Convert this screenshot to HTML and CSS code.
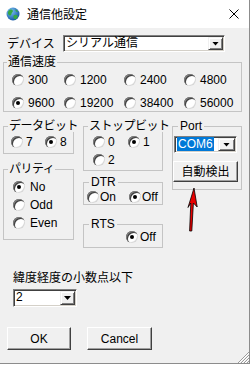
FILE: index.html
```html
<!DOCTYPE html>
<html lang="ja">
<head>
  <meta charset="UTF-8" />
  <title>通信他設定</title>
  <link rel="stylesheet" href="styles.css">
</head>
<body>
<div class="win">

  <!-- title bar -->
  <div class="titlebar">
    <svg class="app-icon" width="14" height="14" viewBox="0 0 14 14">
      <defs>
        <radialGradient id="globe" cx="35%" cy="30%" r="80%">
          <stop offset="0" stop-color="#7cc4f5"/>
          <stop offset="1" stop-color="#0a4c9c"/>
        </radialGradient>
      </defs>
      <circle cx="7" cy="7" r="6.5" fill="url(#globe)"/>
      <path d="M2.2 4.5 C3.5 2.2 6 2 6.8 3.6 C7.4 5 5.6 5.6 5.4 7.2 C5.2 8.8 3.2 9 2.4 7.6 C1.9 6.6 1.8 5.4 2.2 4.5 Z" fill="#35a845"/>
      <path d="M7.6 8.4 C9 7.4 11.6 7.8 11.8 9.4 C11.4 11 9.6 12.6 8.4 12 C7.6 11.2 7 9.4 7.6 8.4 Z" fill="#35a845"/>
      <path d="M9 2.4 C10.4 2.6 11.6 3.6 12 5 C11 5.2 9.8 4.6 9 2.4 Z" fill="#35a845"/>
    </svg>
    <span class="title">通信他設定</span>
    <svg class="close" width="10" height="10" viewBox="0 0 10 10">
      <path d="M0.5 0.5 L9.5 9.5 M9.5 0.5 L0.5 9.5" stroke="#000" stroke-width="1"/>
    </svg>
  </div>

  <div class="client">

    <div class="device-row">
      <span class="lbl">デバイス</span>
      <div class="combo combo-device"><span class="val">シリアル通信</span><span class="drop"></span></div>
    </div>

    <!-- baud rate -->
    <fieldset class="grp grp-speed">
      <legend>通信速度</legend>
      <div class="opts speed-opts">
        <label class="opt"><span class="rb"></span>300</label>
        <label class="opt"><span class="rb"></span>1200</label>
        <label class="opt"><span class="rb"></span>2400</label>
        <label class="opt"><span class="rb"></span>4800</label>
        <label class="opt"><span class="rb on"></span>9600</label>
        <label class="opt"><span class="rb"></span>19200</label>
        <label class="opt"><span class="rb"></span>38400</label>
        <label class="opt"><span class="rb"></span>56000</label>
      </div>
    </fieldset>

    <div class="mid">
      <div class="col">
        <fieldset class="grp grp-data">
          <legend class="kana">データビット</legend>
          <div class="opts data-opts">
            <label class="opt"><span class="rb"></span>7</label>
            <label class="opt"><span class="rb on"></span>8</label>
          </div>
        </fieldset>
        <fieldset class="grp grp-parity">
          <legend class="kana">パリティ</legend>
          <div class="opts parity-opts">
            <label class="opt"><span class="rb on"></span>No</label>
            <label class="opt"><span class="rb"></span>Odd</label>
            <label class="opt"><span class="rb"></span>Even</label>
          </div>
        </fieldset>
      </div>

      <div class="col">
        <fieldset class="grp grp-stop">
          <legend class="kana">ストップビット</legend>
          <div class="opts stop-opts">
            <label class="opt"><span class="rb"></span>0</label>
            <label class="opt"><span class="rb on"></span>1</label>
            <label class="opt"><span class="rb"></span>2</label>
          </div>
        </fieldset>
        <fieldset class="grp grp-dtr">
          <legend>DTR</legend>
          <div class="opts dtr-opts">
            <label class="opt"><span class="rb"></span>On</label>
            <label class="opt"><span class="rb on"></span>Off</label>
          </div>
        </fieldset>
        <fieldset class="grp grp-rts">
          <legend>RTS</legend>
          <div class="opts rts-opts">
            <label class="opt"><span class="rb on"></span>Off</label>
          </div>
        </fieldset>
      </div>

      <div class="col">
        <fieldset class="grp grp-port">
          <legend>Port</legend>
          <div class="combo combo-port"><span class="val"><span class="sel">COM6</span></span><span class="drop"></span></div>
          <div class="btn btn-detect">自動検出</div>
        </fieldset>
      </div>
    </div>

    <div class="latlon">緯度経度の小数点以下</div>
    <div class="combo combo-digits"><span class="val">2</span><span class="drop"></span></div>

    <div class="btns">
      <div class="btn btn-ok">OK</div>
      <div class="btn btn-cancel">Cancel</div>
    </div>
  </div>

  <!-- size grip -->
  <svg class="grip" width="12" height="12" viewBox="0 0 12 12">
    <path d="M12 1 L1 12 M12 4 L4 12 M12 7 L7 12 M12 10 L10 12" stroke="#9a9a9a" stroke-width="1"/>
    <path d="M12 2 L2 12 M12 5 L5 12 M12 8 L8 12" stroke="#fff" stroke-width="1"/>
  </svg>

  <!-- red arrow drawn on the screenshot -->
  <svg class="arrow" width="14" height="48" viewBox="184 186 14 48">
    <polygon points="194,188 197.2,207 193.4,203 191.8,231 189.6,231 190.8,203 188,207.5"
             fill="#e80000" stroke="#000" stroke-width="0.8" stroke-linejoin="round"/>
  </svg>
</div>
</body>
</html>
```

FILE: styles.css
```css
* { box-sizing: border-box; }
html, body { margin: 0; padding: 0; background: #fff; }
body {
  font: 12px/14px "Liberation Sans", "Noto Sans CJK JP", sans-serif;
  color: #000;
}

.win {
  position: relative;
  width: 250px;
  height: 364px;
  background: #f0f0f0;
  border-right: 1px solid #8c8c8c;
  border-bottom: 1px solid #8c8c8c;
}

/* title bar */
.titlebar { height: 28px; background: #fff; display: flex; align-items: center; padding-left: 6px; }
.app-icon { margin-right: 7px; }
.title { font-family: "Noto Sans CJK JP", sans-serif; font-size: 12px; }
.close { margin-left: auto; margin-right: 10px; }

.client { padding-top: 7px; }

/* device */
.device-row { display: flex; align-items: center; height: 17px; padding-left: 7px; }
.device-row .lbl { width: 56px; }

/* combo boxes */
.combo {
  display: flex;
  height: 17px;
  background: #fff;
  border: 1px solid;
  border-color: #808080 #fff #fff #808080;
  box-shadow: inset 1px 1px 0 #404040, inset -1px -1px 0 #d4d0c8;
  padding: 1px;
}
.combo .val { flex: 1; padding-left: 1px; line-height: 13px; white-space: nowrap; }
.combo .drop {
  width: 15px;
  background: #f0f0f0;
  border: 1px solid;
  border-color: #f0f0f0 #404040 #404040 #f0f0f0;
  box-shadow: inset 1px 1px 0 #fff, inset -1px -1px 0 #808080;
  display: flex;
  align-items: center;
  justify-content: center;
}
.combo .drop::after {
  content: "";
  width: 7px;
  height: 4px;
  background: #000;
  clip-path: polygon(0 0, 100% 0, 50% 100%);
}
.combo-device { width: 162px; }
.combo-port { width: 63px; margin: 4px 0 0 1px; }
.combo-port .drop { width: 17px; }
.combo-port .sel { background: #0078d7; color: #fff; padding: 0 1px; }
.combo-digits { width: 64px; height: 18px; margin: 4px 0 0 13px; }

/* group boxes */
.grp { margin: 0; padding: 0; min-width: 0; border: 1px solid #c4c4c4; }
.grp legend { margin-left: 5px; padding: 0 2px; line-height: 12px; height: 12px; white-space: nowrap; }
.grp legend.kana { margin-left: 4px; padding: 0 1px; letter-spacing: -0.5px; }
.grp-speed { margin: 4px 7px 0 3px; }
.grp-speed legend { margin-left: 3px; padding: 0 1px; }

/* radio buttons */
.opts { display: grid; grid-auto-rows: 14px; }
.opt { display: flex; align-items: center; gap: 3px; height: 14px; white-space: nowrap; }
.rb {
  flex: none;
  position: relative;
  width: 12px;
  height: 12px;
  border-radius: 50%;
  background: #fff;
  box-shadow: inset 1px 1px 0 #808080, inset 2px 2px 0 #404040, inset -1px -1px 0 #d8d8d8;
}
.rb.on::after {
  content: "";
  position: absolute;
  left: 4px;
  top: 4px;
  width: 4px;
  height: 4px;
  border-radius: 50%;
  background: #000;
}

.speed-opts { grid-template-columns: 52px 60px 60px 1fr; row-gap: 9px; padding: 5px 0 1px 8px; }
.speed-opts .opt { gap: 4px; }

.mid {
  display: grid;
  grid-template-columns: 71px 80px 70px;
  column-gap: 9px;
  align-items: start;
  margin: 8px 0 0 3px;
}
.col { display: flex; flex-direction: column; }

.data-opts { grid-template-columns: 34px 1fr; padding: 3px 0 4px 7px; }
.grp-parity { margin-top: 9px; }
.parity-opts { row-gap: 4px; padding: 5px 0 9px 9px; }
.parity-opts .opt { gap: 5px; }

.stop-opts { grid-template-columns: 35px 1fr; row-gap: 4px; padding: 3px 0 3px 9px; }
.grp-dtr { margin-top: 5px; }
.dtr-opts { grid-template-columns: 42px 1fr; padding: 2px 0 0 3px; }
.dtr-opts .opt { gap: 1px; }
.grp-rts { margin-top: 13px; }
.rts-opts { padding: 0 0 3px 42px; }
.rts-opts .opt { gap: 2px; }

.grp-port { padding-bottom: 7px; }

/* buttons */
.btn {
  height: 23px;
  display: flex;
  align-items: center;
  justify-content: center;
  background: #f0f0f0;
  border: 1px solid;
  border-color: #fff #404040 #404040 #fff;
  box-shadow: inset -1px -1px 0 #a0a0a0;
}
.btn-detect { width: 65px; height: 21px; margin-top: 8px; }
.btns { display: flex; gap: 16px; margin-top: 20px; padding-left: 7px; }
.btn-ok { width: 64px; }
.btn-cancel { width: 65px; }

.latlon { margin-top: 23px; padding-left: 13px; }

/* overlays */
.grip { position: absolute; right: 0; bottom: 0; }
.arrow { position: absolute; left: 184px; top: 186px; }
```
